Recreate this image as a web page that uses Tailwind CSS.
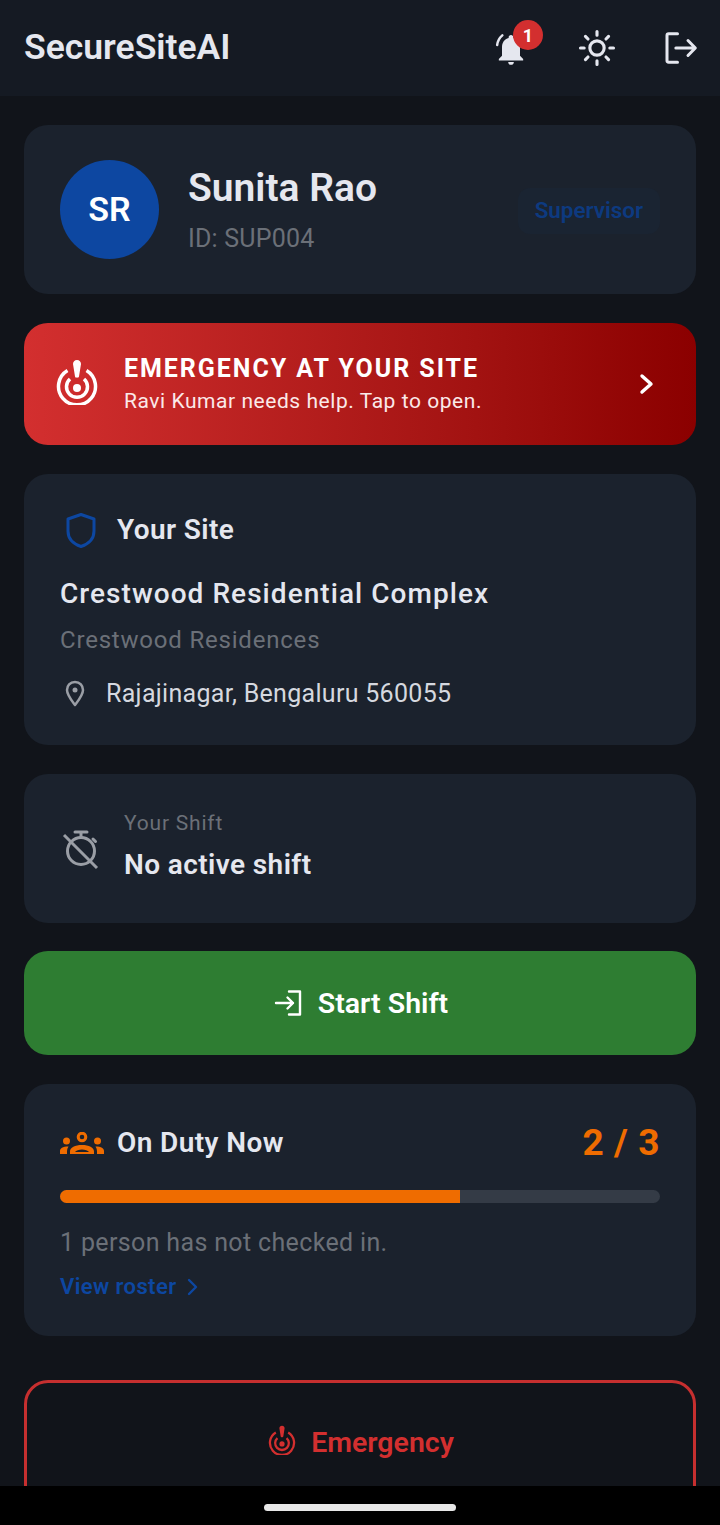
<!DOCTYPE html>
<html lang="en">
<head>
    <meta charset="UTF-8">
    <meta name="viewport" content="width=device-width, initial-scale=1.0">
    <title>SecureSiteAI</title>
    <script src="https://cdn.jsdelivr.net/npm/@tailwindcss/browser@4"></script>
</head>
<body class="bg-black font-['Roboto',sans-serif]">
<div class="w-[720px] h-[1525px] flex flex-col overflow-hidden bg-[#11141a]">

    <!-- App bar -->
    <header class="h-[96px] shrink-0 bg-[#151a23] flex items-center pl-[24px] pr-[20px]">
        <h1 class="text-[35.500px] font-semibold text-[#e5e7ef] flex-1">SecureSiteAI</h1>
        <div class="relative w-[40px] h-[40px] mr-[44px] mt-[2px]">
            <svg class="w-[40px] h-[40px]" viewBox="0 0 24 24" fill="none">
                <path d="M12 3.600c-.8 0-1.400.6-1.400 1.300v.5C8 6 6.600 8.300 6.600 11v5l-1.900 2v.9h14.600V18l-1.900-2v-5c0-2.700-1.400-5-4-5.600v-.5c0-.7-.6-1.300-1.400-1.300z" fill="#e5e7ef"/>
                <path d="M10.300 19.800h3.400a1.700 1.700 0 0 1-3.400 0z" fill="#e5e7ef"/>
                <path d="M6.800 3.800A9 9 0 0 0 3.700 9.600" stroke="#e5e7ef" stroke-width="1.500" stroke-linecap="round"/>
            </svg>
            <span class="absolute top-[-9px] right-[-12px] w-[30px] h-[30px] rounded-full bg-[#d32f2f] text-white text-[18px] font-bold flex items-center justify-center">1</span>
        </div>
        <svg class="w-[44px] h-[44px] mr-[41px]" viewBox="0 0 24 24" fill="none" stroke="#e5e7ef" stroke-width="1.700" stroke-linecap="round">
            <circle cx="12" cy="12" r="3.900"/>
            <path d="M12 3v2M12 19v2M3 12h2M19 12h2M5.700 5.700l1.400 1.400M16.900 16.900l1.400 1.400M5.700 18.300l1.400-1.400M16.900 7.100l1.400-1.400"/>
        </svg>
        <svg class="w-[40px] h-[40px]" viewBox="0 0 24 24" fill="none" stroke="#e5e7ef" stroke-width="1.800" stroke-linecap="round" stroke-linejoin="round">
            <path d="M10.500 3.500H5.200a1 1 0 0 0-1 1v15a1 1 0 0 0 1 1h5.300"/>
            <path d="M9.500 12h11.500M16.800 7.500l4.400 4.500-4.400 4.500"/>
        </svg>
    </header>

    <main class="flex-1 min-h-0 overflow-hidden px-[24px] pt-[29px] flex flex-col">

        <!-- Profile -->
        <section class="h-[169px] shrink-0 rounded-[24px] bg-[#1b222d] flex items-center pl-[36px] pr-[36px]">
            <div class="w-[99px] h-[99px] rounded-full bg-[#0d47a1] text-white text-[34px] font-semibold flex items-center justify-center">SR</div>
            <div class="flex-1 ml-[29px]">
                <div class="text-[39px] leading-[44px] font-semibold text-[#e5e7ef] mt-[1px]">Sunita Rao</div>
                <div class="text-[25px] leading-[30px] mt-[14px] tracking-[0.200px] text-[#6b7078]">ID: SUP004</div>
            </div>
            <span class="h-[46px] px-[17px] rounded-[12px] bg-[#1a2432] text-[#0d3a80] text-[22.400px] font-semibold flex items-center mt-[3px]">Supervisor</span>
        </section>

        <!-- Emergency banner -->
        <section class="h-[122px] shrink-0 mt-[29px] rounded-[24px] bg-gradient-to-r from-[#d32f2f] to-[#8b0000] flex items-center pl-[32px] pr-[39px]">
            <svg class="w-[42px] h-[46px] shrink-0 -mt-[4px]" viewBox="0 0 42 46" fill="none" stroke="white" stroke-width="3.500">
                <path d="M11.500 11.500A18.500 18.500 0 1 0 30.500 11.500"/>
                <path d="M14 20a10.500 10.500 0 1 0 14 0"/>
                <circle cx="21" cy="29" r="4" fill="white" stroke="none"/>
                <path d="M21 1c2.500 0 4 1.700 4 4l-2 12.500c-.2 1.600-3.800 1.600-4 0L17 5c0-2.300 1.500-4 4-4z" fill="white" stroke="none"/>
            </svg>
            <div class="flex-1 ml-[26px] text-white">
                <div class="text-[25px] leading-[32px] font-bold tracking-[1.950px]">EMERGENCY AT YOUR SITE</div>
                <div class="text-[21px] leading-[28px] mt-[2px] tracking-[0.550px] text-[#fbe9e9]">Ravi Kumar needs help. Tap to open.</div>
            </div>
            <svg class="w-[20px] h-[24px]" viewBox="0 0 20 24" fill="none" stroke="white" stroke-width="3.400" stroke-linecap="round" stroke-linejoin="round">
                <path d="M5 4l9 8-9 8"/>
            </svg>
        </section>

        <!-- Site -->
        <section class="h-[271px] shrink-0 mt-[29px] rounded-[24px] bg-[#1b222d] pl-[36px] pr-[36px] pt-[36px]">
            <div class="flex items-center h-[40px]">
                <svg class="w-[42px] h-[40px] shrink-0" viewBox="0 0 42 40" fill="none" stroke="#0d47a1" stroke-width="3" stroke-linejoin="round">
                    <path d="M21 4.500l13 4.500v12c0 8-5.500 13-13 15.500C13.500 34 8 29 8 21V9z"/>
                </svg>
                <span class="ml-[15px] text-[28px] font-semibold tracking-[0.400px] text-[#e5e7ef]">Your Site</span>
            </div>
            <div class="mt-[25px] text-[28px] leading-[38px] font-medium tracking-[1.050px] text-[#e5e7ef]">Crestwood Residential Complex</div>
            <div class="mt-[12px] text-[24px] leading-[30px] tracking-[0.800px] text-[#6b7078]">Crestwood Residences</div>
            <div class="mt-[24px] flex items-center">
                <svg class="w-[30px] h-[30px] shrink-0" viewBox="0 0 30 30" fill="none" stroke="#9a9ea5" stroke-width="2.500">
                    <path d="M15 3c-5 0-8 3.700-8 8 0 5 5 11 8 15 3-4 8-10 8-15 0-4.300-3-8-8-8z" stroke-linejoin="round"/>
                    <circle cx="15" cy="11" r="2.500" fill="#9a9ea5" stroke="none"/>
                </svg>
                <span class="ml-[16px] text-[25px] leading-[30px] tracking-[0.300px] text-[#d5d8df]">Rajajinagar, Bengaluru 560055</span>
            </div>
        </section>

        <!-- Shift -->
        <section class="h-[149px] shrink-0 mt-[29px] rounded-[24px] bg-[#1b222d] flex items-center pl-[36px]">
            <svg class="w-[42px] h-[42px] shrink-0" viewBox="0 0 42 42" fill="none" stroke="#9a9ea5" stroke-width="3" stroke-linecap="round">
                <path d="M15 4h12M21 4v5M33 11l2.500 2.500"/>
                <circle cx="21" cy="23" r="13.500"/>
                <path d="M4 7l33 33" stroke-linecap="butt"/>
            </svg>
            <div class="ml-[22px] -mt-[4px]">
                <div class="text-[21px] leading-[26px] tracking-[0.800px] text-[#6b7078]">Your Shift</div>
                <div class="mt-[11px] text-[28px] leading-[36px] font-semibold tracking-[0.400px] text-[#e5e7ef]">No active shift</div>
            </div>
        </section>

        <!-- Start shift -->
        <button class="h-[104px] shrink-0 mt-[28px] rounded-[24px] bg-[#2e7d32] flex items-center justify-center pl-[2px] text-white">
            <svg class="w-[30px] h-[30px]" viewBox="0 0 30 30" fill="none" stroke="white" stroke-width="2.400" stroke-linecap="round" stroke-linejoin="round">
                <path d="M15 3.500h11v23H15"/>
                <path d="M2 15h17M13.500 9.500l5.500 5.500-5.500 5.500"/>
            </svg>
            <span class="ml-[14px] text-[28.500px] font-semibold pt-[3px]">Start Shift</span>
        </button>

        <!-- On duty -->
        <section class="h-[252px] shrink-0 mt-[29px] rounded-[24px] bg-[#1b222d] pl-[36px] pr-[36px] pt-[36px]">
            <div class="flex items-center h-[46px]">
                <svg class="w-[44px] h-[24px] shrink-0 mt-[2px]" viewBox="0 0 44 24" fill="#ef6c00">
                    <circle cx="22" cy="5" r="3.800" fill="none" stroke="#ef6c00" stroke-width="3"/>
                    <circle cx="6.500" cy="9" r="3.500"/>
                    <circle cx="37.500" cy="9" r="3.500"/>
                    <path d="M0 22v-3c0-2.500 2.500-4.500 8.500-4.500-1 1.500-1.500 3-1.500 4.500v3zM44 22v-3c0-2.500-2.500-4.500-8.500-4.500 1 1.500 1.500 3 1.500 4.500v3z"/>
                    <path d="M10 22v-2.500c0-4 5-6.500 12-6.500s12 2.500 12 6.500V22zM15 20h14c-1-1.500-4-2.500-7-2.500s-6 1-7 2.500z" fill-rule="evenodd"/>
                </svg>
                <span class="ml-[13px] text-[28px] font-semibold tracking-[0.400px] text-[#e5e7ef] flex-1">On Duty Now</span>
                <span class="text-[37px] font-bold tracking-[0.600px] text-[#ef6c00]">2 / 3</span>
            </div>
            <div class="mt-[24px] h-[13px] rounded-full bg-[#343b46] overflow-hidden">
                <div class="h-full w-[400px] bg-[#ef6c00]"></div>
            </div>
            <div class="mt-[23px] text-[25px] leading-[34px] tracking-[0.350px] text-[#6b7078]">1 person has not checked in.</div>
            <div class="mt-[13px] flex items-center text-[#0d47a1]">
                <span class="text-[22px] leading-[28px] font-semibold tracking-[0.400px]">View roster</span>
                <svg class="w-[14px] h-[18px] ml-[10px]" viewBox="0 0 14 18" fill="none" stroke="#0d47a1" stroke-width="2.400" stroke-linecap="round" stroke-linejoin="round">
                    <path d="M3 2l7 7-7 7"/>
                </svg>
            </div>
        </section>

        <!-- Emergency button, runs under the nav bar -->
        <button class="h-[140px] shrink-0 mt-[44px] rounded-[24px] border-[3px] border-[#c62f2f] flex items-start justify-center pl-[2px] pt-[42px] text-[#d32f2f]">
            <svg class="w-[28px] h-[30px]" viewBox="0 0 42 46" fill="none" stroke="#d32f2f" stroke-width="3.500">
                <path d="M11.500 11.500A18.500 18.500 0 1 0 30.500 11.500"/>
                <path d="M14 20a10.500 10.500 0 1 0 14 0"/>
                <circle cx="21" cy="29" r="4" fill="#d32f2f" stroke="none"/>
                <path d="M21 1c2.500 0 4 1.700 4 4l-2 12.500c-.2 1.600-3.800 1.600-4 0L17 5c0-2.300 1.500-4 4-4z" fill="#d32f2f" stroke="none"/>
            </svg>
            <span class="ml-[15px] text-[28.500px] leading-[34px] font-semibold mt-[1px]">Emergency</span>
        </button>
    </main>

    <!-- System nav bar -->
    <div class="h-[39px] shrink-0 bg-black flex items-center justify-center">
        <div class="w-[192px] h-[7px] rounded-full bg-[#e8e8e8] mt-[3px]"></div>
    </div>
</div>
</body>
</html>
